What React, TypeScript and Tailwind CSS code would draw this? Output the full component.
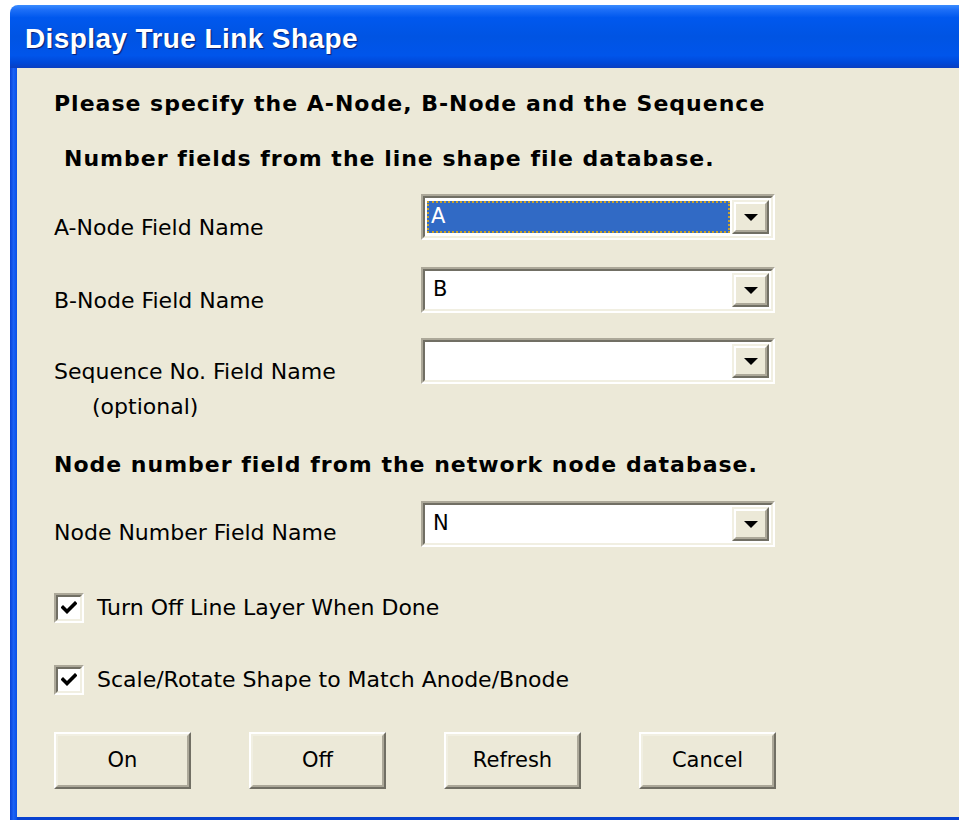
import React from "react";

const ui = { fontFamily: '"DejaVu Sans", Verdana, sans-serif' } as React.CSSProperties;

function DropArrow() {
  return (
    <div className="w-[37px] h-full flex items-stretch bg-[#ECE9D8] border-2 border-t-[#F1EFE2] border-l-[#F1EFE2] border-b-[#716F64] border-r-[#716F64]">
      <div className="flex-1 flex items-center justify-center border-2 border-t-white border-l-white border-b-[#ACA899] border-r-[#ACA899]">
        <svg width="16" height="9" viewBox="0 0 16 9">
          <polygon points="1,1 15,1 8,8" fill="#000" />
        </svg>
      </div>
    </div>
  );
}

function Combo({ value, selected }: { value: string; selected?: boolean }) {
  return (
    <div className="w-[354px] h-[46px] shrink-0 border-2 border-t-[#ACA899] border-l-[#ACA899] border-b-white border-r-white">
      <div className="h-full border-2 border-t-[#716F64] border-l-[#716F64] border-b-[#F1EFE2] border-r-[#F1EFE2] bg-white flex items-stretch p-[2px]">
        <div className="flex-1 flex items-stretch pr-[2px] py-[1px]">
          {selected ? (
            <div className="flex-1 bg-[#316AC5] border-2 border-dotted border-[#C9A12A] flex items-center pl-[2px] text-white text-[21px]">
              {value}
            </div>
          ) : (
            <div className="flex-1 flex items-center pl-[6px] text-black text-[21px]">{value}</div>
          )}
        </div>
        <DropArrow />
      </div>
    </div>
  );
}

function Check({ label }: { label: string }) {
  return (
    <div className="h-[30px] flex items-center gap-[13px]">
      <div className="w-[30px] h-[30px] border-2 border-t-[#ACA899] border-l-[#ACA899] border-b-white border-r-white">
        <div className="w-full h-full bg-white border-2 border-t-[#716F64] border-l-[#716F64] border-b-[#F1EFE2] border-r-[#F1EFE2] flex items-center justify-center">
          <svg width="16" height="14" viewBox="0 0 16 14">
            <path d="M2 6.5 L6 10.5 L14 2.5" stroke="#000" strokeWidth="3.6" fill="none" strokeLinecap="square" />
          </svg>
        </div>
      </div>
      <span className="text-[22px] leading-[28px] text-black">{label}</span>
    </div>
  );
}

function Btn({ label }: { label: string }) {
  return (
    <div className="w-[137px] h-[57px] bg-[#ECE9D8] border-2 border-t-white border-l-white border-b-[#716F64] border-r-[#716F64]">
      <div className="w-full h-full flex items-center justify-center border-2 border-t-[#F1EFE2] border-l-[#F1EFE2] border-b-[#ACA899] border-r-[#ACA899] text-[21px] text-black">
        {label}
      </div>
    </div>
  );
}

function FieldRow({ label, value, selected, note, top }: { label: string; value: string; selected?: boolean; note?: string; top: string }) {
  return (
    <div className={`${top} h-[46px] flex`}>
      <div className="w-[367px] pt-[20px] text-[22px] leading-[28px] whitespace-nowrap">
        <div>{label}</div>
        {note && <div className="pl-[38px] mt-[7px]">{note}</div>}
      </div>
      <Combo value={value} selected={selected} />
    </div>
  );
}

export default function App() {
  return (
    <div className="w-[959px] h-[820px] bg-white overflow-hidden" style={ui}>
      <div className="ml-[10px] mt-[5px] h-[815px] flex flex-col rounded-tl-[8px] overflow-hidden">
        {/* title bar */}
        <div className="h-[63px] shrink-0 flex items-center pl-[15px] pt-[4px] bg-[linear-gradient(to_bottom,#3A8CFF_0%,#1C6EF7_8%,#0058EE_20%,#0054E3_50%,#0055EB_80%,#0048D8_92%,#0A3EC0_100%)]">
          <span
            className="text-white font-bold text-[28px] tracking-[0.4px] [text-shadow:1px_1px_1px_#0A1E70]"
            style={{ fontFamily: '"Liberation Sans", Arial, sans-serif' }}
          >
            Display True Link Shape
          </span>
        </div>
        {/* body */}
        <div className="flex-1 flex bg-[#0044D8]">
          <div className="w-[7px] bg-[linear-gradient(to_right,#0841D6,#1B62F5,#0A50E6)]" />
          <div className="flex-1 flex flex-col">
            <div className="flex-1 bg-[#ECE9D8] flex flex-col pl-[37px] text-black">
              <div className="mt-[21px] h-[28px] flex items-center text-[22px] tracking-[1px] font-bold whitespace-nowrap">
                Please specify the A-Node, B-Node and the Sequence
              </div>
              <div className="mt-[27px] h-[28px] flex items-center text-[22px] tracking-[1px] font-bold pl-[10px] whitespace-nowrap">
                Number fields from the line shape file database.
              </div>
              <FieldRow top="mt-[22px]" label="A-Node Field Name" value="A" selected />
              <FieldRow top="mt-[27px]" label="B-Node Field Name" value="B" />
              <FieldRow top="mt-[25px]" label="Sequence No. Field Name" note="(optional)" value="" />
              <div className="mt-[66px] h-[28px] flex items-center text-[22px] tracking-[1px] font-bold whitespace-nowrap">
                Node number field from the network node database.
              </div>
              <div className="mt-[23px] h-[46px] flex">
                <div className="w-[367px] pt-[18px] text-[22px] leading-[28px] whitespace-nowrap">Node Number Field Name</div>
                <Combo value="N" />
              </div>
              <div className="mt-[46px] flex flex-col gap-[42px]">
                <Check label="Turn Off Line Layer When Done" />
                <Check label="Scale/Rotate Shape to Match Anode/Bnode" />
              </div>
              <div className="mt-[37px] flex gap-[58px]">
                <Btn label="On" />
                <Btn label="Off" />
                <Btn label="Refresh" />
                <Btn label="Cancel" />
              </div>
            </div>
            <div className="h-[3px] bg-[#0842D0]" />
          </div>
        </div>
      </div>
    </div>
  );
}
